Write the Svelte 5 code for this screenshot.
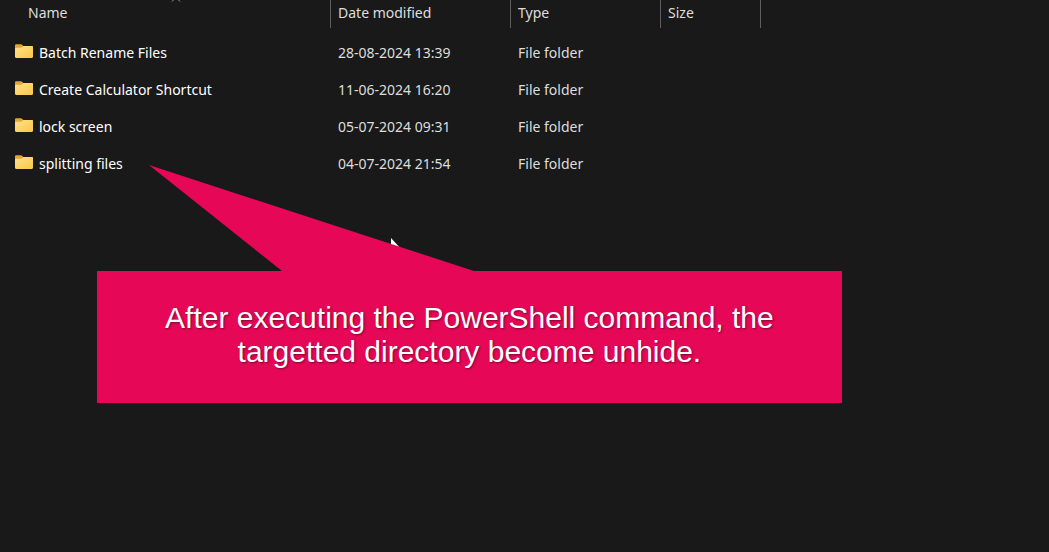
<script lang="ts">
  const columns = ['Name', 'Date modified', 'Type', 'Size'];

  const folders = [
    { name: 'Batch Rename Files', modified: '28-08-2024 13:39', type: 'File folder' },
    { name: 'Create Calculator Shortcut', modified: '11-06-2024 16:20', type: 'File folder' },
    { name: 'lock screen', modified: '05-07-2024 09:31', type: 'File folder' },
    { name: 'splitting files', modified: '04-07-2024 21:54', type: 'File folder' }
  ];
</script>

<main class="explorer">
  <table class="files">
    <colgroup>
      <col class="col-name" />
      <col class="col-date" />
      <col class="col-type" />
      <col class="col-size" />
    </colgroup>
    <thead>
      <tr>
        {#each columns as column, index}
          <th scope="col" aria-sort={index === 0 ? 'ascending' : undefined}>
            {column}
            {#if index === 0}
              <svg class="sort" viewBox="0 0 10 6" aria-hidden="true">
                <path d="M1 5.5 5 1.5 9 5.5" />
              </svg>
            {/if}
          </th>
        {/each}
      </tr>
    </thead>
    <tbody>
      {#each folders as folder}
        <tr>
          <td>
            <span class="file">
              <svg class="folder" viewBox="0 0 18 15" aria-hidden="true">
                <path
                  d="M0 1.4C0 .6.6.2 1.400.2h4.400c.5 0 .9.2 1.200.500L8.300 2H16.700c.7 0 1.300.6 1.300 1.300V8H0z"
                  fill="#e3a62f"
                />
                <path
                  d="M0 4.600c0-.5.4-.9.9-.9h5c.5 0 .8-.1 1.100-.4l1-.9c.3-.2.6-.4 1-.4h7.800c.7 0 1.200.5 1.200 1.200v9.600c0 .7-.5 1.200-1.200 1.200H1.200C.5 14 0 13.500 0 12.800z"
                  fill="url(#folder-front)"
                />
              </svg>
              {folder.name}
            </span>
          </td>
          <td>{folder.modified}</td>
          <td>{folder.type}</td>
          <td></td>
        </tr>
      {/each}
    </tbody>
  </table>

  <svg class="defs" aria-hidden="true">
    <defs>
      <linearGradient id="folder-front" x1="0" y1="0" x2="1" y2="1">
        <stop offset="0" stop-color="#ffe08a" />
        <stop offset="1" stop-color="#fac847" />
      </linearGradient>
    </defs>
  </svg>

  <svg class="cursor" viewBox="0 0 12 18" aria-hidden="true">
    <path d="M0 0v16l4-4h7z" fill="#fff" />
  </svg>

  <aside class="callout">
    <svg class="tail" viewBox="0 0 327 107" aria-hidden="true">
      <path d="M0 0 325 106v1H133v-1z" fill="#e60757" />
    </svg>
    <p>After executing the PowerShell command, the targetted directory become unhide.</p>
  </aside>
</main>

<style>
  :global(body) {
    margin: 0;
    background: #191919;
  }

  .explorer {
    position: relative;
    min-height: 100vh;
    overflow: hidden;
    color: #dedede;
    background: #191919;
    font-family: 'Noto Sans', 'Open Sans', sans-serif;
    font-size: 14px;
    line-height: 20px;
  }

  .files {
    width: 761px;
    border-collapse: separate;
    border-spacing: 0;
    table-layout: fixed;
  }

  .col-name {
    width: 331px;
  }

  .col-date {
    width: 180px;
  }

  .col-type {
    width: 150px;
  }

  .col-size {
    width: 100px;
  }

  th {
    position: relative;
    height: 28px;
    box-sizing: border-box;
    border-right: 1px solid #5e5e5e;
    padding: 0 7px 2px;
    font-weight: 400;
    text-align: left;
  }

  th:first-child {
    padding-left: 28px;
  }

  tbody::before {
    display: block;
    height: 6px;
    content: '';
  }

  td {
    height: 37px;
    padding: 0 7px;
  }

  td:first-child {
    padding-left: 15px;
    color: #fff;
  }

  .sort {
    position: absolute;
    top: -4px;
    left: 171px;
    width: 10px;
    height: 6px;
    fill: none;
    stroke: #9a9a9a;
  }

  .file {
    display: flex;
    align-items: center;
    gap: 6px;
  }

  .folder {
    width: 18px;
    height: 15px;
    flex: none;
    margin-bottom: 2px;
  }

  .defs {
    position: absolute;
    width: 0;
    height: 0;
  }

  .cursor {
    position: absolute;
    top: 238px;
    left: 391px;
    width: 12px;
    height: 18px;
  }

  .callout {
    position: absolute;
    top: 271px;
    left: 97px;
    width: 71%;
    box-sizing: border-box;
    padding: 30px 64px 34px;
    color: #fff;
    background: #e60757;
    font-family: 'Liberation Sans', Arial, sans-serif;
    font-size: 30px;
    line-height: 34px;
    text-align: center;
    text-shadow: 1px 1px 2px rgb(60 0 30 / 60%);
  }

  .callout p {
    margin: 0;
  }

  .tail {
    position: absolute;
    bottom: 100%;
    left: 52px;
    width: 327px;
    height: 107px;
    margin-bottom: -1px;
  }
</style>
